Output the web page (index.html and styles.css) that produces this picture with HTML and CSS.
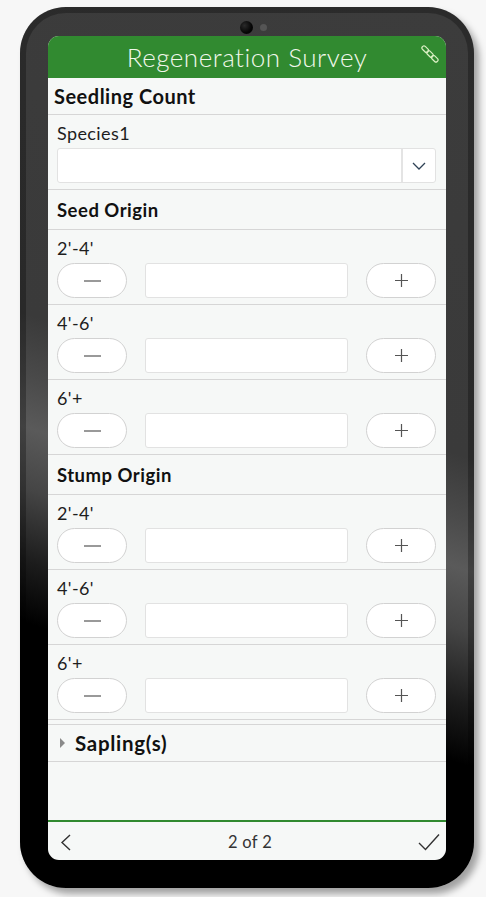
FILE: index.html
```html
<!DOCTYPE html>
<html lang="en">
<head>
<meta charset="utf-8">
<title>Regeneration Survey</title>
<link rel="stylesheet" href="styles.css">
</head>
<body>
<div class="phone">
  <div class="camera"><span class="lens"></span><span class="sensor"></span></div>
  <div class="screen">
    <header class="appbar">
      <h1 class="title">Regeneration Survey</h1>
      <svg class="link-icon" width="18" height="18" viewBox="0 0 18 18">
        <g transform="rotate(45 9 9)" fill="none" stroke="#d9efc2" stroke-width="1.2">
          <rect x="-1.5" y="7" width="7.5" height="4" rx="1.8"/>
          <rect x="5.2" y="7" width="7.5" height="4" rx="1.8"/>
          <rect x="11.9" y="7" width="7.5" height="4" rx="1.8"/>
        </g>
      </svg>
    </header>
    <main class="form">
      <div class="group-title">Seedling Count</div>
      <div class="field">
        <div class="label">Species1</div>
        <div class="select">
          <div class="select-input"></div>
          <div class="select-btn">
            <svg width="14" height="8" viewBox="0 0 14 8"><path d="M1 1 L7 7 L13 1" fill="none" stroke="#2f4256" stroke-width="1.3"/></svg>
          </div>
        </div>
      </div>

      <div class="section-title">Seed Origin</div>
      <div class="field">
        <div class="label">2'-4'</div>
        <div class="stepper">
          <div class="step-btn"><svg width="17" height="2" viewBox="0 0 17 2"><path d="M0 1 H17" stroke="#555" stroke-width="1.2"/></svg></div>
          <div class="step-input"></div>
          <div class="step-btn"><svg width="13" height="13" viewBox="0 0 13 13"><path d="M0 6.5 H13 M6.5 0 V13" stroke="#555" stroke-width="1.2"/></svg></div>
        </div>
      </div>
      <div class="field">
        <div class="label">4'-6'</div>
        <div class="stepper">
          <div class="step-btn"><svg width="17" height="2" viewBox="0 0 17 2"><path d="M0 1 H17" stroke="#555" stroke-width="1.2"/></svg></div>
          <div class="step-input"></div>
          <div class="step-btn"><svg width="13" height="13" viewBox="0 0 13 13"><path d="M0 6.5 H13 M6.5 0 V13" stroke="#555" stroke-width="1.2"/></svg></div>
        </div>
      </div>
      <div class="field">
        <div class="label">6'+</div>
        <div class="stepper">
          <div class="step-btn"><svg width="17" height="2" viewBox="0 0 17 2"><path d="M0 1 H17" stroke="#555" stroke-width="1.2"/></svg></div>
          <div class="step-input"></div>
          <div class="step-btn"><svg width="13" height="13" viewBox="0 0 13 13"><path d="M0 6.5 H13 M6.5 0 V13" stroke="#555" stroke-width="1.2"/></svg></div>
        </div>
      </div>

      <div class="section-title">Stump Origin</div>
      <div class="field">
        <div class="label">2'-4'</div>
        <div class="stepper">
          <div class="step-btn"><svg width="17" height="2" viewBox="0 0 17 2"><path d="M0 1 H17" stroke="#555" stroke-width="1.2"/></svg></div>
          <div class="step-input"></div>
          <div class="step-btn"><svg width="13" height="13" viewBox="0 0 13 13"><path d="M0 6.5 H13 M6.5 0 V13" stroke="#555" stroke-width="1.2"/></svg></div>
        </div>
      </div>
      <div class="field">
        <div class="label">4'-6'</div>
        <div class="stepper">
          <div class="step-btn"><svg width="17" height="2" viewBox="0 0 17 2"><path d="M0 1 H17" stroke="#555" stroke-width="1.2"/></svg></div>
          <div class="step-input"></div>
          <div class="step-btn"><svg width="13" height="13" viewBox="0 0 13 13"><path d="M0 6.5 H13 M6.5 0 V13" stroke="#555" stroke-width="1.2"/></svg></div>
        </div>
      </div>
      <div class="field">
        <div class="label">6'+</div>
        <div class="stepper">
          <div class="step-btn"><svg width="17" height="2" viewBox="0 0 17 2"><path d="M0 1 H17" stroke="#555" stroke-width="1.2"/></svg></div>
          <div class="step-input"></div>
          <div class="step-btn"><svg width="13" height="13" viewBox="0 0 13 13"><path d="M0 6.5 H13 M6.5 0 V13" stroke="#555" stroke-width="1.2"/></svg></div>
        </div>
      </div>

      <div class="collapse">
        <svg class="caret" width="5" height="10" viewBox="0 0 5 10"><path d="M0 0 L5 5 L0 10 Z" fill="#8a8a8a"/></svg>
        <span>Sapling(s)</span>
      </div>
    </main>
    <footer class="navbar">
      <svg class="nav-back" width="11" height="17" viewBox="0 0 11 17"><path d="M10 1 L2 8.5 L10 16" fill="none" stroke="#333" stroke-width="1.4"/></svg>
      <span class="page">2 of 2</span>
      <svg class="nav-done" width="22" height="18" viewBox="0 0 22 18"><path d="M1 10 L7.5 16.5 L21 1.5" fill="none" stroke="#333" stroke-width="1.4"/></svg>
    </footer>
  </div>
</div>
</body>
</html>
```

FILE: styles.css
```css
html, body {
  margin: 0;
  padding: 0;
}

body {
  width: 486px;
  height: 897px;
  overflow: hidden;
  background: #f7f7f7;
  font-family: Lato, "Noto Sans", sans-serif;
}

.phone {
  box-sizing: border-box;
  width: 454px;
  height: 881px;
  margin: 7px 0 0 20px;
  padding: 14px 28px 28px;
  border-radius: 46px;
  display: flex;
  flex-direction: column;
  background: linear-gradient(198deg,
    #3c3c3c 0%,
    #3a3a3a 44%,
    #4a4a4a 50%,
    #5a5a5a 55%,
    #454545 61%,
    #1c1c1c 68%,
    #000 74%,
    #000 100%);
  box-shadow: 5px 6px 7px rgba(0, 0, 0, 0.35), inset 0 0 0 6px rgba(0, 0, 0, 0.28);
}

.camera {
  height: 13px;
  margin-bottom: 2px;
  padding-left: 12px;
  display: flex;
  align-items: center;
  justify-content: center;
  gap: 7px;
}

.lens {
  width: 13px;
  height: 13px;
  border-radius: 50%;
  background: radial-gradient(circle at 35% 35%, #2a2a2a 0%, #050505 60%, #000 100%);
}

.sensor {
  width: 7px;
  height: 7px;
  border-radius: 50%;
  background: #555;
}

.screen {
  flex: 1;
  border-radius: 11px;
  overflow: hidden;
  background: #f6f8f7;
  display: flex;
  flex-direction: column;
}

.appbar {
  position: relative;
  height: 42px;
  flex: none;
  background: #318a30;
  display: flex;
  align-items: center;
  justify-content: center;
}

.title {
  margin: 0;
  font-size: 26px;
  font-weight: 300;
  color: #f1f8ec;
  letter-spacing: 0.5px;
}

.link-icon {
  position: absolute;
  right: 7px;
  top: 9px;
}

.form {
  flex: 1;
}

.group-title {
  height: 36px;
  padding-left: 6px;
  border-bottom: 1px solid #d6d6d6;
  display: flex;
  align-items: center;
  font-size: 20px;
  font-weight: 700;
  letter-spacing: 0.5px;
  color: #111;
}

.section-title {
  height: 39px;
  padding-left: 9px;
  border-bottom: 1px solid #d6d6d6;
  display: flex;
  align-items: center;
  font-size: 18.5px;
  font-weight: 700;
  letter-spacing: 0.5px;
  color: #111;
}

.field {
  height: 74px;
  padding: 0 10px 0 9px;
  border-bottom: 1px solid #d6d6d6;
}

.label {
  padding-top: 6px;
  margin-bottom: 3px;
  line-height: 24px;
  font-size: 18px;
  letter-spacing: 0.4px;
  color: #1e1e1e;
}

.select {
  box-sizing: border-box;
  height: 35px;
  display: flex;
  background: #fff;
  border: 1px solid #e2e2e2;
  border-radius: 3px;
}

.select-input {
  flex: 1;
}

.select-btn {
  width: 32px;
  border-left: 2px solid #e4e4e4;
  display: flex;
  align-items: center;
  justify-content: center;
}

.stepper {
  height: 35px;
  display: flex;
  justify-content: space-between;
}

.step-btn {
  box-sizing: border-box;
  width: 70px;
  background: #fff;
  border: 1px solid #d2d2d2;
  border-radius: 18px;
  display: flex;
  align-items: center;
  justify-content: center;
}

.step-input {
  box-sizing: border-box;
  width: 203px;
  background: #fff;
  border: 1px solid #e2e2e2;
  border-radius: 3px;
}

.collapse {
  margin-top: 4px;
  height: 36px;
  padding-left: 12px;
  border-top: 1px solid #d6d6d6;
  border-bottom: 1px solid #d6d6d6;
  display: flex;
  align-items: center;
  gap: 10px;
  font-size: 20.5px;
  font-weight: 700;
  letter-spacing: 0.7px;
  color: #111;
}

.navbar {
  flex: none;
  border-top: 2px solid #318a30;
  padding: 2px 6px 0 12px;
  box-sizing: border-box;
  height: 40px;
  display: grid;
  grid-template-columns: 1fr auto 1fr;
  align-items: center;
}

.nav-done {
  justify-self: end;
}

.page {
  font-size: 16.5px;
  letter-spacing: 0.3px;
  color: #333;
}
```
